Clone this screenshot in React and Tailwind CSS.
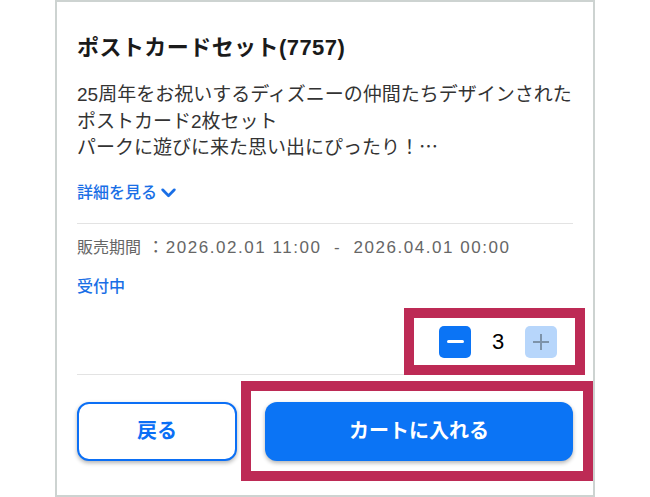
import React from "react";

export default function App() {
  return (
    <div className="relative w-[650px] h-[497px] bg-white font-['Liberation_Sans','Noto_Sans_CJK_JP',sans-serif]">
      {/* CARD */}
      <div className="mx-auto w-[540px] h-[497px] border-2 border-[#cdd3d1] bg-white px-5 pt-[31px] flex flex-col">
        <h1 className="text-[22px] leading-[30px] font-bold tracking-[0.02em] text-[#1a1a1a] whitespace-nowrap">
          ポストカードセット(7757)
        </h1>

        <p className="mt-[19px] text-[19px] leading-[26.5px] text-[#333] whitespace-nowrap">
          25周年をお祝いするディズニーの仲間たちデザインされた
          <br />
          ポストカード2枚セット
          <br />
          パークに遊びに来た思い出にぴったり
          <span className="leading-none font-['Noto_Sans_CJK_JP',sans-serif]">！…</span>
        </p>

        {/* DETAIL LINK */}
        <div className="mt-[19px] flex items-center gap-[3px] text-[16px] leading-[24px] font-medium text-[#1a6fe6]">
          <span>詳細を見る</span>
          <svg width="17" height="17" viewBox="0 0 16 16" fill="none">
            <path d="M2.5 5.5 8 11l5.5-5.5" stroke="#1a6fe6" strokeWidth="2.6" strokeLinecap="round" strokeLinejoin="round" />
          </svg>
        </div>

        <div className="mt-[18px] h-px bg-[#e3e3e3]" />

        <div className="mt-3 text-[16px] leading-[24px] text-[#666] whitespace-nowrap">
          販売期間
          <span className="leading-none text-[17px] tracking-[0.09em]">
            {" "}：2026.02.01 11:00 &nbsp;-&nbsp; 2026.04.01 00:00
          </span>
        </div>

        <div className="mt-[15px] text-[16px] leading-[24px] font-medium text-[#1a6fe6]">
          受付中
        </div>

        {/* QUANTITY */}
        <div className="mt-[27px] flex items-center justify-end pr-4">
          <button className="w-8 h-8 rounded-[5px] bg-[#0b74f5] flex items-center justify-center">
            <span className="block w-[17px] h-[3px] bg-white rounded-sm" />
          </button>
          <span className="w-[54px] text-center text-[22px] leading-8 text-black">3</span>
          <button className="w-8 h-8 rounded-[5px] bg-[#b7d6fb] flex items-center justify-center">
            <svg width="20" height="20" viewBox="0 0 20 20">
              <path d="M10 2v16M2 10h16" stroke="#7d93aa" strokeWidth="2" />
            </svg>
          </button>
        </div>

        <div className="mt-4 h-px bg-[#e3e3e3]" />

        {/* ACTIONS */}
        <div className="mt-[27px] flex gap-7">
          <button className="w-[160px] h-[59px] rounded-xl border-2 border-[#0b6ff5] bg-white text-[20px] font-bold text-[#0b6ff5] shadow-[0_2px_4px_rgba(0,0,0,0.3)]">
            戻る
          </button>
          <button className="flex-1 h-[59px] rounded-xl bg-[#0b74f5] text-[20px] font-bold text-white shadow-[0_2px_4px_rgba(0,0,0,0.3)]">
            カートに入れる
          </button>
        </div>
      </div>

      {/* ANNOTATION FRAMES */}
      <div className="absolute left-[404px] top-[308px] w-[181px] h-[67px] border-[10px] border-[#bd2a55]" />
      <div className="absolute left-[241px] top-[381px] w-[352px] h-[100px] border-[10px] border-[#bd2a55]" />
    </div>
  );
}
